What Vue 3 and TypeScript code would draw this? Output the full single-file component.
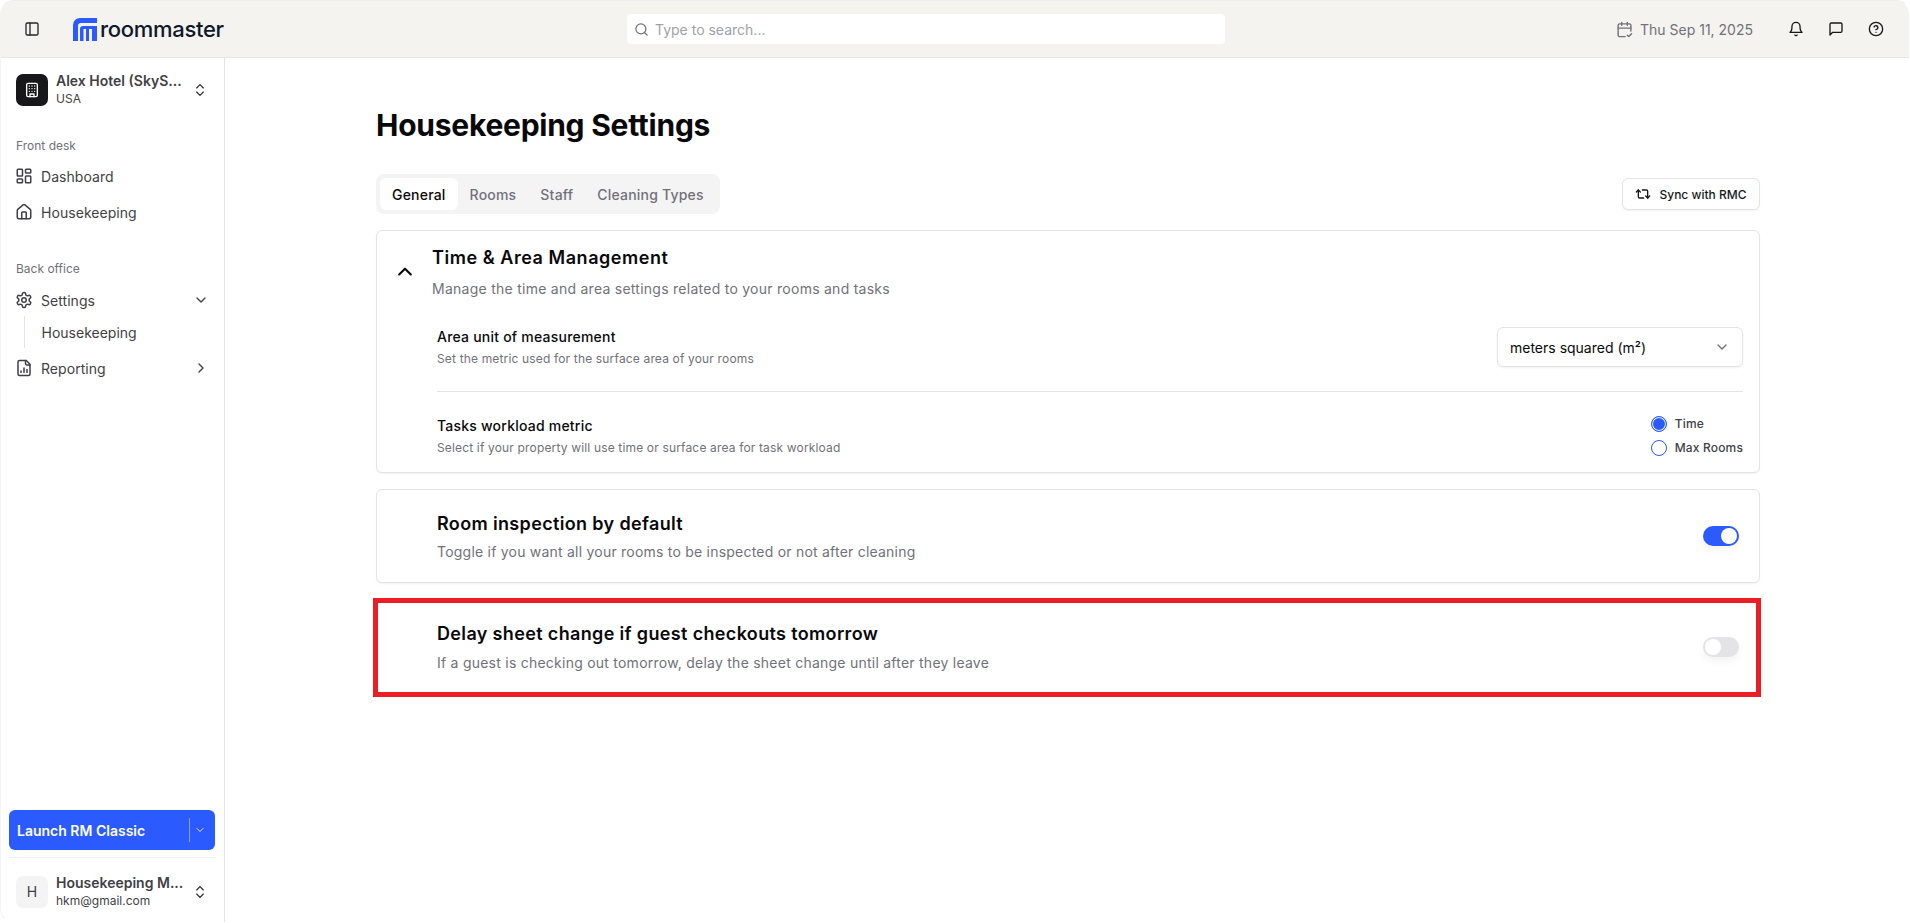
<script setup lang="ts">
const frontDesk = ['Dashboard', 'Housekeeping']
const tabs = ['General', 'Rooms', 'Staff', 'Cleaning Types']
</script>

<template>
  <div class="frame">
    <header class="topbar">
      <div class="top-left">
        <button class="icon-btn side-toggle" aria-label="Toggle sidebar">
          <svg width="16" height="16" viewBox="0 0 24 24" fill="none" stroke="#27272a" stroke-width="2" stroke-linecap="round" stroke-linejoin="round"><rect x="3" y="3" width="18" height="18" rx="2"/><path d="M9 3v18"/></svg>
        </button>
        <div class="logo">
          <svg width="24" height="23" viewBox="0 0 24 23"><path fill="#2b5bff" d="M0 23V7a7 7 0 0 1 7-7h17v5H8a3 3 0 0 0-3 3v15z"/><path fill="#2b5bff" d="M7 23V11a3 3 0 0 1 3-3h14v15h-5V11h-3v12h-3V11h-2.500v12z"/></svg>
          <span class="logo-text">roommaster</span>
        </div>
      </div>
      <div class="search">
        <svg width="15" height="15" viewBox="0 0 24 24" fill="none" stroke="#71717a" stroke-width="2" stroke-linecap="round"><circle cx="11" cy="11" r="8"/><path d="m21 21-4.300-4.300"/></svg>
        <span>Type to search...</span>
      </div>
      <div class="top-right">
        <div class="date">
          <svg width="17" height="17" viewBox="0 0 24 24" fill="none" stroke="#71717a" stroke-width="2" stroke-linecap="round" stroke-linejoin="round"><path d="M21 14V6a2 2 0 0 0-2-2H5a2 2 0 0 0-2 2v14a2 2 0 0 0 2 2h8"/><path d="M16 2v4M8 2v4M3 10h18"/><path d="m16 20 2 2 4-4"/></svg>
          <span>Thu Sep 11, 2025</span>
        </div>
        <svg class="ti bell" width="16" height="16" viewBox="0 0 24 24" fill="none" stroke="#18181b" stroke-width="2" stroke-linecap="round" stroke-linejoin="round"><path d="M10.300 21a1.940 1.940 0 0 0 3.400 0"/><path d="M6 8a6 6 0 0 1 12 0c0 7 3 9 3 9H3s3-2 3-9"/></svg>
        <svg class="ti" width="16" height="16" viewBox="0 0 24 24" fill="none" stroke="#18181b" stroke-width="2" stroke-linecap="round" stroke-linejoin="round"><path d="M3 21V5a2 2 0 0 1 2-2h14a2 2 0 0 1 2 2v10a2 2 0 0 1-2 2H7z"/></svg>
        <svg class="ti" width="16" height="16" viewBox="0 0 24 24" fill="none" stroke="#18181b" stroke-width="2" stroke-linecap="round" stroke-linejoin="round"><circle cx="12" cy="12" r="10"/><path d="M9.100 9a3 3 0 0 1 5.800 1c0 2-3 3-3 3"/><path d="M12 17h.01"/></svg>
      </div>
    </header>

    <div class="body">
      <aside class="sidebar">
        <div class="switcher workspace">
          <div class="badge dark">
            <svg width="16" height="16" viewBox="0 0 24 24" fill="none" stroke="#fff" stroke-width="2" stroke-linecap="round" stroke-linejoin="round"><rect x="4" y="2" width="16" height="20" rx="2"/><path d="M9 22v-4h6v4M8 6h.01M12 6h.01M16 6h.01M8 10h.01M12 10h.01M16 10h.01M8 14h.01M12 14h.01M16 14h.01"/></svg>
          </div>
          <div class="switch-text">
            <strong>Alex Hotel (SkyS...</strong>
            <span>USA</span>
          </div>
          <svg class="updown" width="16" height="16" viewBox="0 0 24 24" fill="none" stroke="#27272a" stroke-width="1.700" stroke-linecap="round" stroke-linejoin="round"><path d="m7 15 5 5 5-5"/><path d="m7 9 5-5 5 5"/></svg>
        </div>

        <div class="nav-label first">Front desk</div>
        <a class="nav-item" v-for="item in frontDesk" :key="item">
          <svg v-if="item === 'Dashboard'" width="18" height="18" viewBox="0 0 24 24" fill="none" stroke="#3f3f46" stroke-width="2" stroke-linecap="round" stroke-linejoin="round"><rect x="3" y="3" width="7" height="9" rx="1"/><rect x="14" y="3" width="7" height="5" rx="1"/><rect x="14" y="12" width="7" height="9" rx="1"/><rect x="3" y="16" width="7" height="5" rx="1"/></svg>
          <svg v-else width="18" height="18" viewBox="0 0 24 24" fill="none" stroke="#3f3f46" stroke-width="2" stroke-linecap="round" stroke-linejoin="round"><path d="M15 21v-8a1 1 0 0 0-1-1h-4a1 1 0 0 0-1 1v8"/><path d="M3 10a2 2 0 0 1 .7-1.500l7-6a2 2 0 0 1 2.600 0l7 6a2 2 0 0 1 .7 1.500v9a2 2 0 0 1-2 2H5a2 2 0 0 1-2-2z"/></svg>
          <span>{{ item }}</span>
        </a>

        <div class="nav-label second">Back office</div>
        <a class="nav-item">
          <svg width="18" height="18" viewBox="0 0 24 24" fill="none" stroke="#3f3f46" stroke-width="2" stroke-linecap="round" stroke-linejoin="round"><path d="M12.220 2h-.44a2 2 0 0 0-2 2v.18a2 2 0 0 1-1 1.730l-.43.250a2 2 0 0 1-2 0l-.15-.08a2 2 0 0 0-2.730.730l-.22.380a2 2 0 0 0 .730 2.730l.15.100a2 2 0 0 1 1 1.720v.510a2 2 0 0 1-1 1.740l-.15.090a2 2 0 0 0-.730 2.730l.22.380a2 2 0 0 0 2.730.730l.15-.08a2 2 0 0 1 2 0l.43.250a2 2 0 0 1 1 1.730V20a2 2 0 0 0 2 2h.44a2 2 0 0 0 2-2v-.18a2 2 0 0 1 1-1.730l.43-.250a2 2 0 0 1 2 0l.15.080a2 2 0 0 0 2.730-.730l.22-.390a2 2 0 0 0-.730-2.730l-.15-.080a2 2 0 0 1-1-1.740v-.500a2 2 0 0 1 1-1.740l.15-.090a2 2 0 0 0 .730-2.730l-.22-.380a2 2 0 0 0-2.730-.730l-.15.080a2 2 0 0 1-2 0l-.43-.250a2 2 0 0 1-1-1.730V4a2 2 0 0 0-2-2z"/><circle cx="12" cy="12" r="3"/></svg>
          <span>Settings</span>
          <svg class="nav-chev" width="16" height="16" viewBox="0 0 24 24" fill="none" stroke="#3f3f46" stroke-width="2" stroke-linecap="round" stroke-linejoin="round"><path d="m6 9 6 6 6-6"/></svg>
        </a>
        <div class="sub"><a>Housekeeping</a></div>
        <a class="nav-item">
          <svg width="18" height="18" viewBox="0 0 24 24" fill="none" stroke="#3f3f46" stroke-width="2" stroke-linecap="round" stroke-linejoin="round"><path d="M15 2H6a2 2 0 0 0-2 2v16a2 2 0 0 0 2 2h12a2 2 0 0 0 2-2V7z"/><path d="M14 2v4a2 2 0 0 0 2 2h4"/><path d="M8 18v-2M12 18v-6M16 18v-4"/></svg>
          <span>Reporting</span>
          <svg class="nav-chev" width="16" height="16" viewBox="0 0 24 24" fill="none" stroke="#3f3f46" stroke-width="2" stroke-linecap="round" stroke-linejoin="round"><path d="m9 18 6-6-6-6"/></svg>
        </a>

        <div class="side-bottom">
          <button class="launch">
            <span class="launch-label">Launch RM Classic</span>
            <span class="launch-sep"></span>
            <svg width="12" height="12" viewBox="0 0 24 24" fill="none" stroke="#dbe4ff" stroke-width="2" stroke-linecap="round" stroke-linejoin="round"><path d="m6 9 6 6 6-6"/></svg>
          </button>
          <div class="switcher user">
            <div class="badge light">H</div>
            <div class="switch-text">
              <strong>Housekeeping M...</strong>
              <span>hkm@gmail.com</span>
            </div>
            <svg class="updown" width="16" height="16" viewBox="0 0 24 24" fill="none" stroke="#27272a" stroke-width="1.700" stroke-linecap="round" stroke-linejoin="round"><path d="m7 15 5 5 5-5"/><path d="m7 9 5-5 5 5"/></svg>
          </div>
        </div>
      </aside>

      <main class="main">
        <h1>Housekeeping Settings</h1>
        <div class="toolbar">
          <div class="tabs">
            <button v-for="(t, i) in tabs" :key="t" class="tab" :class="{ active: i === 0 }">{{ t }}</button>
          </div>
          <button class="sync">
            <svg width="16" height="16" viewBox="0 0 24 24" fill="none" stroke="#18181b" stroke-width="2" stroke-linecap="round" stroke-linejoin="round"><path d="m2 9 3-3 3 3"/><path d="M13 18H7a2 2 0 0 1-2-2V6"/><path d="m22 15-3 3-3-3"/><path d="M11 6h6a2 2 0 0 1 2 2v10"/></svg>
            <span>Sync with RMC</span>
          </button>
        </div>

        <section class="card time-card">
          <div class="card-head">
            <svg class="collapse" width="20" height="20" viewBox="0 0 24 24" fill="none" stroke="#09090b" stroke-width="2.500" stroke-linecap="round" stroke-linejoin="round"><path d="m5 15 7-7 7 7"/></svg>
            <div>
              <h2 class="head-title">Time &amp; Area Management</h2>
              <p class="desc head-desc">Manage the time and area settings related to your rooms and tasks</p>
            </div>
          </div>
          <div class="row area-row">
            <div>
              <h3>Area unit of measurement</h3>
              <p class="small">Set the metric used for the surface area of your rooms</p>
            </div>
            <div class="select">
              <span>meters squared (m²)</span>
              <svg width="16" height="16" viewBox="0 0 24 24" fill="none" stroke="#71717a" stroke-width="2" stroke-linecap="round" stroke-linejoin="round"><path d="m6 9 6 6 6-6"/></svg>
            </div>
          </div>
          <div class="divider"></div>
          <div class="row tasks-row">
            <div>
              <h3>Tasks workload metric</h3>
              <p class="small">Select if your property will use time or surface area for task workload</p>
            </div>
            <div class="radios">
              <label class="radio"><i class="dot on"></i><span>Time</span></label>
              <label class="radio"><i class="dot"></i><span>Max Rooms</span></label>
            </div>
          </div>
        </section>

        <section class="card toggle-card plain">
          <div>
            <h2>Room inspection by default</h2>
            <p class="desc">Toggle if you want all your rooms to be inspected or not after cleaning</p>
          </div>
          <span class="switch on"><i></i></span>
        </section>

        <section class="card toggle-card marked">
          <div>
            <h2>Delay sheet change if guest checkouts tomorrow</h2>
            <p class="desc">If a guest is checking out tomorrow, delay the sheet change until after they leave</p>
          </div>
          <span class="switch"><i></i></span>
        </section>
      </main>
    </div>
  </div>
</template>

<style>
html, body { margin: 0; background: #fff; }
</style>

<style scoped>
* { box-sizing: border-box; }
.frame {
  width: 1910px; height: 923px; display: flex; flex-direction: column; overflow: hidden;
  font-family: "Inter", "Noto Sans", sans-serif; color: #09090b; background: #fff;
  border-radius: 14px; border: 1px solid; border-color: #eeeeee #fff #fff #f4f4f4;
}
.topbar {
  height: 57px; flex: none; display: grid; grid-template-columns: 626px 598px 1fr; align-items: center;
  background: #f5f3ef; border-bottom: 1px solid #e6e6e6;
}
.top-left { display: flex; align-items: center; padding-left: 23px; }
.icon-btn { width: 16px; height: 16px; padding: 0; border: 0; background: none; display: flex; }
.logo { display: flex; align-items: center; margin-left: 33px; gap: 3px; }
.logo-text { font-size: 22px; font-weight: 500; color: #0f172a; letter-spacing: -0.3px; line-height: 24px; }
.search {
  height: 30px; background: #fff; border-radius: 4px; display: flex; align-items: center; gap: 6px;
  padding-left: 7px; font-size: 14px; color: #a1a1aa;
}
.top-right { display: flex; align-items: center; justify-content: flex-end; padding-right: 25px; }
.date { display: flex; align-items: center; gap: 7px; font-size: 14px; color: #71717a; margin-right: 35px; }
.ti { margin-left: 24px; }
.bell { margin-left: 0; }

.body { flex: 1; min-height: 0; display: flex; }
.sidebar {
  width: 224px; flex: none; border-right: 1px solid #e4e4e7; display: flex; flex-direction: column;
  padding: 14px 8px 0;
}
.switcher { display: flex; align-items: center; padding-left: 7px; }
.badge { width: 32px; height: 32px; border-radius: 7px; display: flex; align-items: center; justify-content: center; flex: none; }
.badge.dark { background: #18181b; }
.badge.light { background: #f4f4f5; font-size: 14px; color: #3f3f46; }
.switch-text { margin-left: 8px; width: 128px; display: flex; flex-direction: column; }
.switch-text strong { font-size: 14px; font-weight: 600; color: #3f3f46; line-height: 18px; white-space: nowrap; }
.switch-text span { font-size: 12px; color: #3f3f46; line-height: 17px; }
.updown { margin-left: 8px; }
.nav-label { font-size: 12px; color: #71717a; padding-left: 7px; line-height: 16px; }
.nav-label.first { margin-top: 31px; margin-bottom: 4px; }
.nav-label.second { margin-top: 31px; margin-bottom: 5px; }
.nav-item { height: 36px; display: flex; align-items: center; gap: 8px; padding-left: 6px; font-size: 14px; color: #3f3f46; letter-spacing: .05px; }
.nav-chev { margin-left: auto; margin-right: 7px; }
.sub { margin: -2px 0 2px 14.500px; border-left: 1px solid #e4e4e7; height: 32px; display: flex; align-items: center; padding-left: 17px; font-size: 14px; color: #3f3f46; }
.side-bottom { margin-top: auto; padding-bottom: 13px; }
.launch {
  width: 206px; height: 40px; border: 0; background: #2b5bff; color: #fff; border-radius: 6px;
  display: flex; align-items: center; font: 600 14px "Inter", sans-serif; padding: 0 0 0 8px;
}
.launch-label { flex: 1; text-align: left; }
.launch-sep { width: 1px; height: 24px; background: #8aa5ff; margin-right: 4px; }
.launch svg { margin-right: 9px; }
.user { margin-top: 7px; border-top: 1px solid #eeeeee; padding-top: 16px; }

.main { flex: 1; padding: 0 149px 0 151px; min-width: 0; }
h1 { margin: 0; padding-top: 49px; font-size: 30px; line-height: 36px; font-weight: 700; color: #09090b; letter-spacing: -.25px; }
.toolbar { display: flex; justify-content: space-between; align-items: center; margin-top: 31px; }
.tabs { display: flex; height: 40px; padding: 4px; background: #f4f4f5; border-radius: 8px; }
.tab { border: 0; background: none; height: 32px; padding: 0 12px; font: 500 14px "Inter", sans-serif; letter-spacing: .2px; color: #71717a; border-radius: 6px; }
.tab.active { background: #fff; color: #09090b; }
.sync {
  height: 32px; width: 138px; padding: 0; background: #fff; border: 1px solid #e4e4e7; border-radius: 6px; display: flex; align-items: center; justify-content: center; gap: 8px;
  font: 500 12px "Inter", sans-serif; color: #18181b; box-shadow: 0 1px 2px rgba(0,0,0,.05);
}
.card { background: #fff; border: 1px solid #e4e4e7; border-radius: 6px; box-shadow: 0 1px 2px rgba(0,0,0,.05); }
.time-card { margin-top: 16px; height: 243px; padding: 15px 16px 0 55px; }
.card-head { display: flex; position: relative; }
.collapse { position: absolute; left: -37px; top: 16px; }
h2 { margin: 0; font-size: 18px; line-height: 24px; font-weight: 600; letter-spacing: .35px; }
.head-title { letter-spacing: .55px; }
.desc { margin: 6px 0 0; font-size: 14px; line-height: 20px; color: #71717a; letter-spacing: .22px; }
.head-desc { margin-top: 9px; letter-spacing: .26px; }
.row { display: flex; justify-content: space-between; align-items: center; margin-left: 5px; }
h3 { margin: 0; font-size: 14px; line-height: 20px; font-weight: 500; letter-spacing: .22px; }
.small { margin: 4px 0 0; font-size: 12px; line-height: 16px; color: #71717a; letter-spacing: .16px; }
.area-row { margin-top: 28px; }
.select {
  width: 246px; height: 40px; border: 1px solid #e4e4e7; border-radius: 6px; padding: 0 12px; display: flex; align-items: center; justify-content: space-between;
  font-size: 14px; box-shadow: 0 1px 2px rgba(0,0,0,.05);
}
.divider { height: 1px; background: #e4e4e7; margin: 24px 0 0 5px; }
.tasks-row { margin-top: 23px; }
.radios { display: flex; flex-direction: column; gap: 8px; margin-top: 1px; }
.radio { display: flex; align-items: center; gap: 8px; font-size: 12px; font-weight: 500; color: #3f3f46; line-height: 16px; letter-spacing: .15px; }
.dot { width: 16px; height: 16px; border-radius: 50%; border: 1px solid #2b5bff; display: block; }
.dot.on { background: #2b5bff; box-shadow: inset 0 0 0 1px #fff; }
.toggle-card { display: flex; justify-content: space-between; align-items: center; }
.plain { margin-top: 16px; height: 94px; padding: 2px 20px 0 60px; }
.plain .switch { margin-top: -2px; }
.switch { width: 36px; height: 20px; border-radius: 10px; background: #e4e4e7; padding: 2px; display: flex; box-shadow: 0 4px 8px rgba(0,0,0,.05); }
.switch i { width: 16px; height: 16px; border-radius: 50%; background: #fff; display: block; }
.switch.on { background: #2b5bff; justify-content: flex-end; }
.marked { height: 99px; margin-top: 15px; margin-left: -3px; width: calc(100% + 4px); border: 5px solid #ee1c25; border-radius: 0; box-shadow: none; padding: 0 17px 0 59px; }
.marked .desc { margin-top: 7px; letter-spacing: .24px; }
.marked .switch { margin-bottom: 2px; }
</style>
